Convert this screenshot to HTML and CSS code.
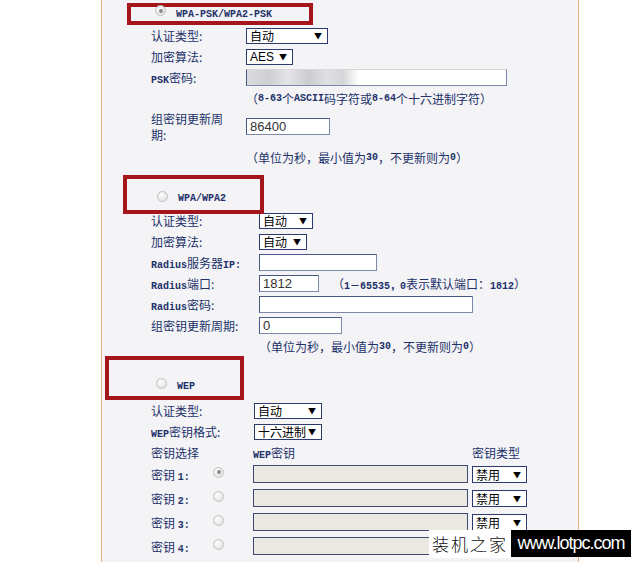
FILE: index.html
```html
<!DOCTYPE html>
<html lang="zh-CN">
  <head>
    <meta charset="UTF-8" />
    <meta name="viewport" content="width=device-width, initial-scale=1.0" />
    <title>无线网络安全设置</title>
    <link rel="stylesheet" href="styles.css">
  </head>
  <body>
    <div class="panel">
      <!-- WPA-PSK/WPA2-PSK -->
      <div class="mode mode-psk">
        <span class="radio on"></span><span class="en">WPA-PSK/WPA2-PSK</span>
      </div>
      <div class="sec sec-psk">
        <div class="row">
          <div class="label">认证类型:</div>
          <div class="select w82"><span>自动</span><i>▼</i></div>
        </div>
        <div class="row">
          <div class="label">加密算法:</div>
          <div class="select w47"><span class="latin">AES</span><i>▼</i></div>
        </div>
        <div class="row">
          <div class="label"><span class="en">PSK</span>密码:</div>
          <div class="input w261 blurred"></div>
        </div>
        <div class="row hint">（<span class="en">8-63</span>个<span class="en">ASCII</span>码字符或<span class="en">8-64</span>个十六进制字符）</div>
        <div class="row period">
          <div class="label narrow">组密钥更新周期:</div>
          <div class="input w84">86400</div>
        </div>
        <div class="row hint">（单位为秒，最小值为<span class="en">30</span>，不更新则为<span class="en">0</span>）</div>
      </div>

      <!-- WPA/WPA2 -->
      <div class="mode mode-wpa">
        <span class="radio"></span><span class="en">WPA/WPA2</span>
      </div>
      <div class="sec sec-wpa">
        <div class="row">
          <div class="label">认证类型:</div>
          <div class="select w54"><span>自动</span><i>▼</i></div>
        </div>
        <div class="row">
          <div class="label">加密算法:</div>
          <div class="select w48"><span>自动</span><i>▼</i></div>
        </div>
        <div class="row">
          <div class="label"><span class="en">Radius</span>服务器<span class="en">IP:</span></div>
          <div class="input w118"></div>
        </div>
        <div class="row">
          <div class="label"><span class="en">Radius</span>端口:</div>
          <div class="input w60">1812</div>
          <div class="note">（<span class="en">1－65535，0</span>表示默认端口：<span class="en">1812</span>）</div>
        </div>
        <div class="row">
          <div class="label"><span class="en">Radius</span>密码:</div>
          <div class="input w214"></div>
        </div>
        <div class="row">
          <div class="label">组密钥更新周期:</div>
          <div class="input w83">0</div>
        </div>
        <div class="row hint">（单位为秒，最小值为<span class="en">30</span>，不更新则为<span class="en">0</span>）</div>
      </div>

      <!-- WEP -->
      <div class="mode mode-wep">
        <span class="radio"></span><span class="en">WEP</span>
      </div>
      <div class="sec sec-wep">
        <div class="row">
          <div class="label">认证类型:</div>
          <div class="select w68"><span>自动</span><i>▼</i></div>
        </div>
        <div class="row">
          <div class="label"><span class="en">WEP</span>密钥格式:</div>
          <div class="select w68"><span>十六进制</span><i>▼</i></div>
        </div>
        <div class="row keys-head">
          <div class="col-pick">密钥选择</div>
          <div class="col-key"><span class="en">WEP</span>密钥</div>
          <div>密钥类型</div>
        </div>
        <div class="row key">
          <div class="key-name">密钥 <span class="en">1:</span></div>
          <span class="radio on"></span>
          <div class="input key-input"></div>
          <div class="select w55"><span>禁用</span><i>▼</i></div>
        </div>
        <div class="row key">
          <div class="key-name">密钥 <span class="en">2:</span></div>
          <span class="radio"></span>
          <div class="input key-input"></div>
          <div class="select w55"><span>禁用</span><i>▼</i></div>
        </div>
        <div class="row key">
          <div class="key-name">密钥 <span class="en">3:</span></div>
          <span class="radio"></span>
          <div class="input key-input"></div>
          <div class="select w55"><span>禁用</span><i>▼</i></div>
        </div>
        <div class="row key">
          <div class="key-name">密钥 <span class="en">4:</span></div>
          <span class="radio"></span>
          <div class="input key-input"></div>
          <div class="select w55"><span>禁用</span><i>▼</i></div>
        </div>
      </div>
    </div>

    <div class="mark">
      <div class="mark-cn">装机之家</div>
      <div class="mark-url">www.lotpc.com</div>
    </div>
  </body>
</html>
```

FILE: styles.css
```css
html,
body {
  margin: 0;
  height: 562px;
  overflow: hidden;
  background: #fff;
}
body {
  font-family: "Noto Sans CJK SC", sans-serif;
  font-size: 12px;
  color: #22316a;
}
.en {
  font-family: "Liberation Mono", "Noto Sans CJK SC", monospace;
  font-size: 10px;
  font-weight: bold;
}
.latin {
  font-family: "Liberation Sans", sans-serif;
}
.panel {
  box-sizing: border-box;
  width: 478px;
  height: 562px;
  margin-left: 101px;
  padding: 3px 0 0 49px;
  background: #f4f4f6;
  border-left: 1px solid #e6ad76;
  border-right: 1px solid #e6ad76;
}

/* red annotation boxes round each mode */
.mode {
  position: relative;
  z-index: 1;
  box-sizing: border-box;
  display: flex;
  align-items: center;
  border: 4px solid #a5161c;
}
.mode .en {
  margin-left: 10px;
}
.mode-psk {
  width: 186px;
  height: 22px;
  margin-left: -24px;
  padding-left: 24px;
}
.mode-psk .radio {
  align-self: flex-start;
  margin-top: -2px;
}
.mode-wpa {
  width: 141px;
  height: 39px;
  margin: 8px 0 -4px -28px;
  padding: 8px 0 0 30px;
}
.mode-wep {
  width: 139px;
  height: 44px;
  margin-left: -46px;
  padding: 16px 0 0 47px;
}
.mode-wpa .radio,
.mode-wep .radio {
  margin-bottom: 5px;
}

.radio {
  box-sizing: border-box;
  display: inline-flex;
  align-items: center;
  justify-content: center;
  width: 11px;
  height: 11px;
  flex: none;
  border: 1px solid #c2c2c4;
  border-radius: 50%;
  background: radial-gradient(circle at 40% 35%, #fdfdfd, #dcdcde);
}
.radio.on::after {
  content: "";
  width: 4px;
  height: 4px;
  border-radius: 50%;
  background: #8a8a8c;
}

.row {
  display: flex;
  align-items: center;
  height: 21px;
}
.row.hint {
  height: 20px;
}
.sec-psk .label {
  width: 95px;
}
.sec-psk .hint {
  padding-left: 95px;
}
.sec-psk .period {
  align-items: flex-start;
  height: 39px;
  padding-top: 10px;
  box-sizing: border-box;
}
.label.narrow {
  width: 80px;
  margin: -7px 15px 0 0;
  line-height: 16px;
}
.sec-wpa .label {
  width: 108px;
}
.sec-wpa .hint {
  padding-left: 108px;
}
.sec-wep .label {
  width: 103px;
}
.note {
  margin-left: 13px;
}

.select {
  box-sizing: border-box;
  display: flex;
  align-items: center;
  justify-content: space-between;
  height: 16px;
  padding: 0 5px 0 3px;
  background: #fff;
  border: 1px solid #2b3b70;
  color: #000;
  font-size: 12px;
  white-space: nowrap;
}
.select i {
  font-style: normal;
  font-size: 8px;
}
.input {
  box-sizing: border-box;
  height: 17px;
  padding-left: 3px;
  background: #fff;
  border: 1px solid #4a5782;
  border-right-color: #7d88aa;
  border-bottom-color: #7d88aa;
  color: #333;
  font-family: "Liberation Sans", sans-serif;
  font-size: 13px;
  line-height: 15px;
}
.blurred {
  border-top-color: #d8d8db;
  background: linear-gradient(90deg, #dcdcdf 0, #cfcfd2 22px, #e4e4e6 40px, #cdcdd0 62px, #e0e0e2 80px, #d6d6d9 96px, #fff 112px);
}

.w47 { width: 47px; }
.w48 { width: 48px; }
.w54 { width: 54px; }
.w55 { width: 55px; }
.w60 { width: 60px; }
.w68 { width: 68px; }
.w82 { width: 82px; }
.w83 { width: 83px; }
.w84 { width: 84px; }
.w118 { width: 118px; }
.w214 { width: 214px; }
.w261 { width: 261px; }

.keys-head {
  height: 20px;
}
.col-pick {
  width: 102px;
}
.col-key {
  width: 219px;
}
.row.key {
  height: 24px;
}
.key-name {
  width: 62px;
}
.key .radio {
  margin: -4px 29px 0 0;
}
.key-input {
  width: 215px;
  height: 18px;
  margin-right: 4px;
  background: #ebe9e1;
  border-color: #3d4a75;
}
.key .select {
  height: 17px;
}

/* site watermark laid over the screenshot */
.mark {
  position: absolute;
  left: 429px;
  top: 530px;
  display: flex;
}
.mark-cn {
  width: 82px;
  height: 28px;
  background: #fff;
  color: #111;
  font-size: 17px;
  font-weight: 300;
  letter-spacing: 2px;
  line-height: 28px;
  text-align: center;
  white-space: nowrap;
}
.mark-url {
  width: 120px;
  height: 27px;
  background: #000;
  color: #fff;
  font-family: "Liberation Sans", sans-serif;
  font-size: 18px;
  letter-spacing: -1px;
  line-height: 27px;
  text-align: center;
}
```
